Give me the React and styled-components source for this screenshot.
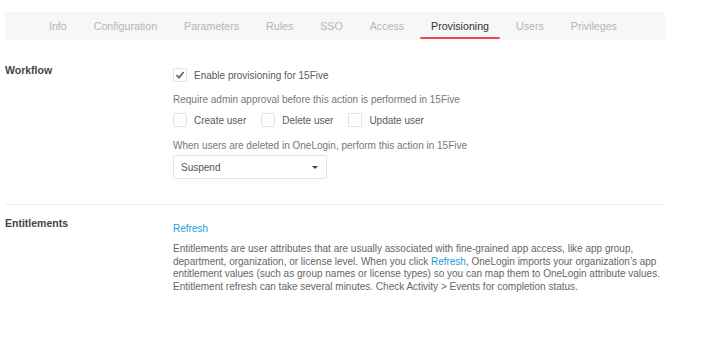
import React from 'react';
import styled, { createGlobalStyle } from 'styled-components';

const GlobalStyle = createGlobalStyle`
  body {
    margin: 0;
    background: #fff;
    font-family: "Liberation Sans", Arial, sans-serif;
    color: #666;
  }
`;

const tabs = ['Info', 'Configuration', 'Parameters', 'Rules', 'SSO', 'Access', 'Provisioning', 'Users', 'Privileges'];

const Page = styled.div`
  width: 660px;
  padding: 12px 0 0 5px;
`;

const TabBar = styled.div`
  display: flex;
  height: 28px;
  background: #f7f7f7;
  padding-left: 33px;
  gap: 5px;
`;

const Tab = styled.div`
  position: relative;
  padding: 0 11px;
  display: flex;
  align-items: center;
  font-size: 10.65px;
  color: ${p => (p.active ? '#333' : '#b5b5b5')};
  &::after {
    content: '';
    display: ${p => (p.active ? 'block' : 'none')};
    position: absolute;
    left: 0;
    right: 0;
    bottom: 1px;
    height: 2px;
    background: #f0444e;
    border-radius: 1px;
  }
`;

const Section = styled.div`
  display: grid;
  grid-template-columns: 168px 1fr;
  padding: ${p => p.pad};
  border-bottom: ${p => (p.divider ? '1px solid #eee' : 'none')};
`;

const Label = styled.div`
  font-size: 10.5px;
  font-weight: 700;
  color: #444;
  padding-top: ${p => p.top || 0}px;
`;

const Body = styled.div`
  display: flex;
  flex-direction: column;
  align-items: flex-start;
  font-size: 10px;
  padding-top: ${p => p.top || 0}px;
`;

const CheckRow = styled.label`
  display: flex;
  align-items: center;
  gap: 7px;
  color: #5a5a5a;
  margin-right: ${p => p.gap || 0}px;
`;

const Box = styled.span`
  width: 12px;
  height: 12px;
  border: 1px solid #e2e2e2;
  border-radius: 1px;
  display: flex;
  align-items: center;
  justify-content: center;
  background: #fff;
`;

const Options = styled.div`
  display: flex;
  margin-top: 8px;
`;

const Note = styled.div`
  color: #777;
  margin-top: ${p => p.top}px;
`;

const Select = styled.div`
  margin-top: 4px;
  width: 154px;
  height: 24px;
  border: 1px solid #e4e4e4;
  border-radius: 2px;
  display: flex;
  align-items: center;
  justify-content: space-between;
  padding: 0 8px 0 7px;
  box-sizing: border-box;
  color: #555;
`;

const Caret = styled.span`
  width: 0;
  height: 0;
  border-left: 3px solid transparent;
  border-right: 3px solid transparent;
  border-top: 3px solid #444;
`;

const Link = styled.span`
  color: #1e9bd7;
  margin-top: ${p => p.top || 0}px;
`;

const Paragraph = styled.p`
  margin: 9px 0 0;
  color: #666;
  font-size: 10px;
  line-height: 12.7px;
  white-space: nowrap;
`;

const Check = () => (
  <svg width="10" height="10" viewBox="0 0 10 10">
    <path d="M1.5 5.2 L4 7.6 L8.6 2" stroke="#666" strokeWidth="1.8" fill="none" />
  </svg>
);

export default function App() {
  return (
    <Page>
      <GlobalStyle />
      <TabBar>
        {tabs.map(t => (
          <Tab key={t} active={t === 'Provisioning'}>{t}</Tab>
        ))}
      </TabBar>
      <Section pad="23px 0 25px" divider>
        <Label top={1}>Workflow</Label>
        <Body top={5}>
          <CheckRow>
            <Box><Check /></Box>
            Enable provisioning for 15Five
          </CheckRow>
          <Note top={12}>Require admin approval before this action is performed in 15Five</Note>
          <Options>
            <CheckRow gap={15}><Box />Create user</CheckRow>
            <CheckRow gap={15}><Box />Delete user</CheckRow>
            <CheckRow><Box />Update user</CheckRow>
          </Options>
          <Note top={13}>When users are deleted in OneLogin, perform this action in 15Five</Note>
          <Select>
            Suspend
            <Caret />
          </Select>
        </Body>
      </Section>
      <Section pad="12px 0">
        <Label>Entitlements</Label>
        <Body>
          <Link top={6}>Refresh</Link>
          <Paragraph>
            Entitlements are user attributes that are usually associated with fine-grained app access, like app group,<br />
            department, organization, or license level. When you click <Link>Refresh</Link>, OneLogin imports your organization’s app<br />
            entitlement values (such as group names or license types) so you can map them to OneLogin attribute values.<br />
            Entitlement refresh can take several minutes. Check Activity &gt; Events for completion status.
          </Paragraph>
        </Body>
      </Section>
    </Page>
  );
}
